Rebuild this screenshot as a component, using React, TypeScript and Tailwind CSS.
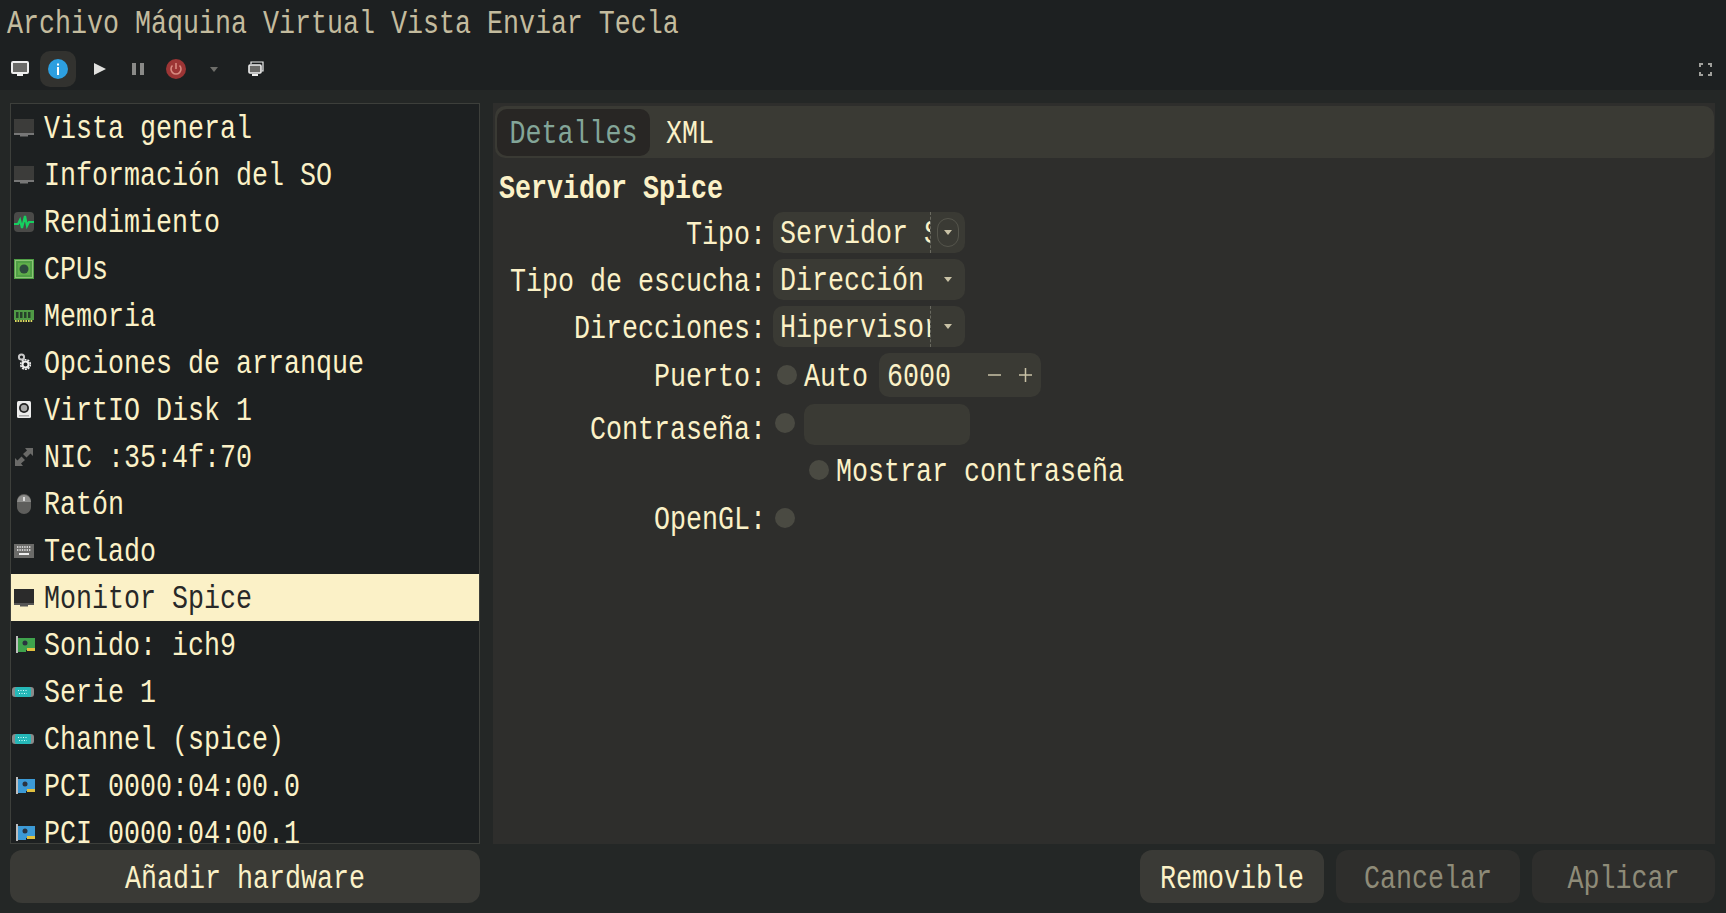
import React from "react";

const T = ({ children, className = "" }: { children: React.ReactNode; className?: string }) => (
  <span className={"inline-block whitespace-pre translate-y-[3px] scale-y-[1.22] leading-none " + className}>{children}</span>
);

const Ico = ({ children, w = 20, h = 20 }: { children: React.ReactNode; w?: number; h?: number }) => (
  <svg width={w} height={h} viewBox={`0 0 ${w} ${h}`} className="shrink-0">{children}</svg>
);

const MonitorDim = ({ dark }: { dark?: boolean }) => (
  <Ico>
    <rect x="0" y="1" width="20" height="14" fill={dark ? "#2b2b2b" : "#3c3c3a"} />
    <rect x="0" y="15" width="20" height="2" fill={dark ? "#555" : "#777"} />
    <rect x="6" y="17" width="8" height="1.500" fill={dark ? "#555" : "#777"} />
  </Ico>
);
const Perf = () => (
  <Ico>
    <rect width="20" height="20" rx="4" fill="#4a4a48" />
    <path d="M0 12h4l2-4 2 8 3-12 2 10 2-4h5" stroke="#16d060" strokeWidth="2.200" fill="none" />
  </Ico>
);
const Cpu = () => (
  <Ico>
    <rect width="20" height="20" fill="#4f9e45" />
    <rect x="1.500" y="1.500" width="17" height="17" fill="none" stroke="#cdeaa8" strokeWidth="1" strokeDasharray="1 1" />
    <rect x="4" y="4" width="12" height="12" fill="#5fae4a" />
    <circle cx="10" cy="10" r="4.500" fill="#2d4a3d" />
  </Ico>
);
const Ram = () => (
  <Ico>
    <rect y="4" width="20" height="10" fill="#4f9a45" />
    {[2, 6, 10, 14].map((x) => <rect key={x} x={x} y="6" width="2.500" height="6" fill="#26402a" />)}
    <path d="M1 15h18" stroke="#dcdc60" strokeWidth="2" strokeDasharray="1.600 1" />
  </Ico>
);
const Gears = () => (
  <Ico h={22}>
    <circle cx="7.500" cy="5" r="2.600" fill="none" stroke="#c8c8c8" strokeWidth="2" />
    <circle cx="11.500" cy="12.500" r="4.800" fill="none" stroke="#eeeeee" strokeWidth="1.600" strokeDasharray="2 1" />
    <circle cx="11.500" cy="12.500" r="3" fill="none" stroke="#eeeeee" strokeWidth="2" />
  </Ico>
);
const Disk = () => (
  <Ico>
    <rect x="3" y="1" width="14" height="17" rx="1.500" fill="#ececec" />
    <circle cx="10" cy="8" r="5" fill="#222" />
    <circle cx="10" cy="8" r="3.200" fill="#a8a8a8" />
    <rect x="5" y="15" width="10" height="1.500" fill="#aaa" />
  </Ico>
);
const Nic = () => (
  <Ico>
    <path d="M11 1h8v8l-2.500-2.500-4 4L9 7l4-3.500zM9 19H1v-8l2.500 2.500 4-4L11 13l-4 3.500z" fill="#6a6a68" />
  </Ico>
);
const Mouse = () => (
  <Ico h={22}>
    <rect x="3" y="1" width="14" height="20" rx="7" fill="#5e5e5c" />
    <path d="M3 9a7 7 0 0 1 14 0z" fill="#8e8e8c" />
    <rect x="9.200" y="4" width="1.600" height="4" fill="#eee" />
  </Ico>
);
const Kbd = () => (
  <Ico>
    <rect y="3" width="20" height="14" fill="#6b6b69" />
    {[6, 9].map((y) => <path key={y} d={`M3 ${y}h14`} stroke="#eee" strokeWidth="1.600" strokeDasharray="1.400 1" />)}
    <rect x="5" y="12" width="10" height="2" fill="#eee" />
  </Ico>
);
const Card = ({ c }: { c: string }) => (
  <Ico w={22}>
    <path d="M2 1h2v17H2z" fill="#bdbdbd" />
    <path d="M4 3h17v12h-9v2H4z" fill={c} />
    <circle cx="11" cy="8" r="2.500" fill="#2a3340" />
    <rect x="13" y="13" width="8" height="3" fill="#e0c040" />
  </Ico>
);
const Serial = () => (
  <div className="-ml-[2px]">
    <Ico w={22}>
      <rect y="5" width="22" height="10" rx="3" fill="#8a8a8a" />
      <rect x="3" y="5" width="16" height="10" rx="2" fill="#25b8b8" />
      <path d="M6 8.500h10M7 11.500h8" stroke="#d8ffff" strokeWidth="1" strokeDasharray="1 1.500" />
    </Ico>
  </div>
);

type Row = { label: string; icon: React.ReactNode; sel?: boolean };
const rows: Row[] = [
  { label: "Vista general", icon: <MonitorDim /> },
  { label: "Información del SO", icon: <MonitorDim /> },
  { label: "Rendimiento", icon: <Perf /> },
  { label: "CPUs", icon: <Cpu /> },
  { label: "Memoria", icon: <Ram /> },
  { label: "Opciones de arranque", icon: <Gears /> },
  { label: "VirtIO Disk 1", icon: <Disk /> },
  { label: "NIC :35:4f:70", icon: <Nic /> },
  { label: "Ratón", icon: <Mouse /> },
  { label: "Teclado", icon: <Kbd /> },
  { label: "Monitor Spice", icon: <MonitorDim dark />, sel: true },
  { label: "Sonido: ich9", icon: <Card c="#3fa34d" /> },
  { label: "Serie 1", icon: <Serial /> },
  { label: "Channel (spice)", icon: <Serial /> },
  { label: "PCI 0000:04:00.0", icon: <Card c="#3c9ad6" /> },
  { label: "PCI 0000:04:00.1", icon: <Card c="#3c9ad6" /> },
];

const Caret = ({ c = "#c9c2a6" }: { c?: string }) => (
  <svg width="8" height="5" viewBox="0 0 8 5"><path d="M0 0h8L4 5z" fill={c} /></svg>
);

const Combo = ({ text, clip, ring }: { text: string; clip?: boolean; ring?: boolean }) => (
  <div className="relative flex h-[41px] w-[192px] items-center rounded-[10px] bg-[#3a3a34] pl-[7px]">
    <div className={"flex h-full w-[151px] items-center overflow-hidden " + (clip ? "border-r border-dashed border-[#6a6a60]" : "")}>
      <T>{text}</T>
    </div>
    <div className={"ml-[6px] flex h-[29px] w-[22px] items-center justify-center rounded-full " + (ring ? "border border-[#55554c]" : "")}>
      <Caret />
    </div>
  </div>
);

const Dot = () => <div className="h-[20px] w-[20px] shrink-0 rounded-full bg-[#4a4a42]" />;

const Label = ({ children }: { children: string }) => (
  <div className="w-[267px] shrink-0 text-right"><T>{children}</T></div>
);

export default function App() {
  return (
    <div className="flex h-[913px] w-[1726px] flex-col overflow-hidden bg-[#1d2021] font-['Liberation_Mono',monospace] text-[26.67px] text-[#fbf1c7]">
      <div className="flex h-[48px] shrink-0 items-start pl-[7px] pt-[9px] text-[#c3bb9e]">
        <T>Archivo Máquina Virtual Vista Enviar Tecla</T>
      </div>

      <div className="flex h-[42px] shrink-0 items-center">
        <div className="flex w-[40px] justify-center">
          <svg width="18" height="16" viewBox="0 0 18 16">
            <rect x="1" y="1" width="16" height="11" rx="1" fill="#6a6a68" stroke="#eeeeee" strokeWidth="2" />
            <rect x="6" y="13" width="6" height="2" fill="#eeeeee" />
          </svg>
        </div>
        <div className="flex h-[36px] w-[36px] items-center justify-center rounded-[10px] bg-[#32322f]">
          <svg width="20" height="20" viewBox="0 0 20 20">
            <circle cx="10" cy="10" r="10" fill="#2d9fe0" />
            <rect x="9" y="8" width="2" height="8" fill="#fff" />
            <rect x="9" y="4.500" width="2" height="2" fill="#fff" />
          </svg>
        </div>
        <div className="ml-[5px] flex w-[38px] justify-center">
          <svg width="12" height="12" viewBox="0 0 12 12"><path d="M0 0l12 6-12 6z" fill="#e0e0de" /></svg>
        </div>
        <div className="flex w-[38px] justify-center">
          <svg width="12" height="12" viewBox="0 0 12 12"><path d="M0 0h4v12H0zM8 0h4v12H8z" fill="#8a8a88" /></svg>
        </div>
        <div className="flex w-[38px] justify-center">
          <svg width="20" height="20" viewBox="0 0 20 20">
            <circle cx="10" cy="10" r="10" fill="#9c3535" />
            <path d="M6.500 6.500a5 5 0 1 0 7 0" fill="none" stroke="#d88a80" strokeWidth="1.600" />
            <path d="M10 4v6" stroke="#d88a80" strokeWidth="1.600" />
          </svg>
        </div>
        <div className="flex w-[38px] justify-center"><Caret c="#6e6e6a" /></div>
        <div className="ml-[4px] flex w-[38px] justify-center">
          <svg width="16" height="16" viewBox="0 0 16 16">
            <path d="M3 3V1h12v9h-1" fill="none" stroke="#eeeeee" strokeWidth="1.200" />
            <rect x="1" y="4" width="12" height="8" rx="1" fill="#6a6a68" stroke="#eeeeee" strokeWidth="1.600" />
            <rect x="4" y="13" width="6" height="2" fill="#eeeeee" />
          </svg>
        </div>
        <div className="ml-auto mr-[14px]">
          <svg width="13" height="13" viewBox="0 0 13 13" className="block">
            <path d="M1 4V1h3M9 1h3v3M12 9v3H9M4 12H1V9" fill="none" stroke="#a0a09c" strokeWidth="2" />
          </svg>
        </div>
      </div>

      <div className="flex min-h-0 flex-1 flex-col bg-[#242726] pb-[10px] pt-[13px]">
        <div className="flex min-h-0 flex-1">
          <div className="ml-[10px] flex w-[470px] shrink-0 flex-col overflow-hidden border border-[#3d3f3b] bg-[#1d2021]">
            {rows.map((r) => (
              <div key={r.label} className={"flex h-[47px] shrink-0 items-center pl-[3px] " + (r.sel ? "bg-[#fbf1c7] text-[#282828]" : "")}>
                <div className="w-[30px] shrink-0">{r.icon}</div>
                <T>{r.label}</T>
              </div>
            ))}
          </div>

          <div className="ml-[13px] mr-[11px] flex min-w-0 flex-1 flex-col bg-[#2e2e2c]">
            <div className="ml-[2px] mr-[1px] mt-[3px] flex h-[52px] shrink-0 items-center rounded-[10px] bg-[#3a3a34] pl-[2px]">
              <div className="flex h-[47px] w-[153px] items-center justify-center rounded-[10px] bg-[#282624] text-[#83a598]">
                <T>Detalles</T>
              </div>
              <div className="ml-[16px]"><T>XML</T></div>
            </div>

            <div className="ml-[6px] flex h-[54px] shrink-0 items-center pt-[4px] font-bold"><T>Servidor Spice</T></div>

            <div className="flex flex-col pl-[6px]">
              <div className="flex h-[41px] items-center gap-[7px]"><Label>Tipo:</Label><Combo text="Servidor Spice" clip ring /></div>
              <div className="mt-[6px] flex h-[41px] items-center gap-[7px]"><Label>Tipo de escucha:</Label><Combo text="Dirección" /></div>
              <div className="mt-[6px] flex h-[41px] items-center gap-[7px]"><Label>Direcciones:</Label><Combo text="Hipervisor" clip /></div>
              <div className="mt-[6px] flex h-[44px] items-center gap-[7px]">
                <Label>Puerto:</Label>
                <div className="ml-[4px]"><Dot /></div>
                <div className="ml-[0px]"><T>Auto</T></div>
                <div className="ml-[4px] flex h-[44px] w-[162px] items-center rounded-[10px] bg-[#3a3a34] pl-[8px]">
                  <T>6000</T>
                  <svg width="44" height="14" viewBox="0 0 44 14" className="ml-[37px]">
                    <path d="M0 7h13M31 7h13M37.500 0v14" stroke="#c9c2a6" strokeWidth="1.500" fill="none" />
                  </svg>
                </div>
              </div>
              <div className="mt-[7px] flex h-[41px] gap-[7px]">
                <div className="flex h-[48px] items-center"><Label>Contraseña:</Label></div>
                <div className="ml-[2px] mt-[9px]"><Dot /></div>
                <div className="ml-[2px] h-[41px] w-[166px] rounded-[10px] bg-[#3a3a34]" />
              </div>
              <div className="mt-[6px] flex h-[38px] items-center pl-[310px]">
                <Dot />
                <div className="ml-[7px]"><T>Mostrar contraseña</T></div>
              </div>
              <div className="mt-[6px] flex h-[46px] items-center gap-[7px]">
                <Label>OpenGL:</Label>
                <div className="ml-[2px]"><Dot /></div>
              </div>
            </div>
          </div>
        </div>

        <div className="mt-[6px] flex h-[53px] shrink-0 items-stretch">
          <button className="ml-[10px] w-[470px] rounded-[12px] bg-[#3a3a36] text-center"><T>Añadir hardware</T></button>
          <div className="ml-auto mr-[11px] flex gap-[12px]">
            <button className="w-[184px] rounded-[12px] bg-[#3a3a36] text-center"><T>Removible</T></button>
            <button className="w-[184px] rounded-[12px] bg-[#2e2e2c] text-center text-[#8e8b78]"><T>Cancelar</T></button>
            <button className="w-[183px] rounded-[12px] bg-[#2e2e2c] text-center text-[#8e8b78]"><T>Aplicar</T></button>
          </div>
        </div>
      </div>
    </div>
  );
}
